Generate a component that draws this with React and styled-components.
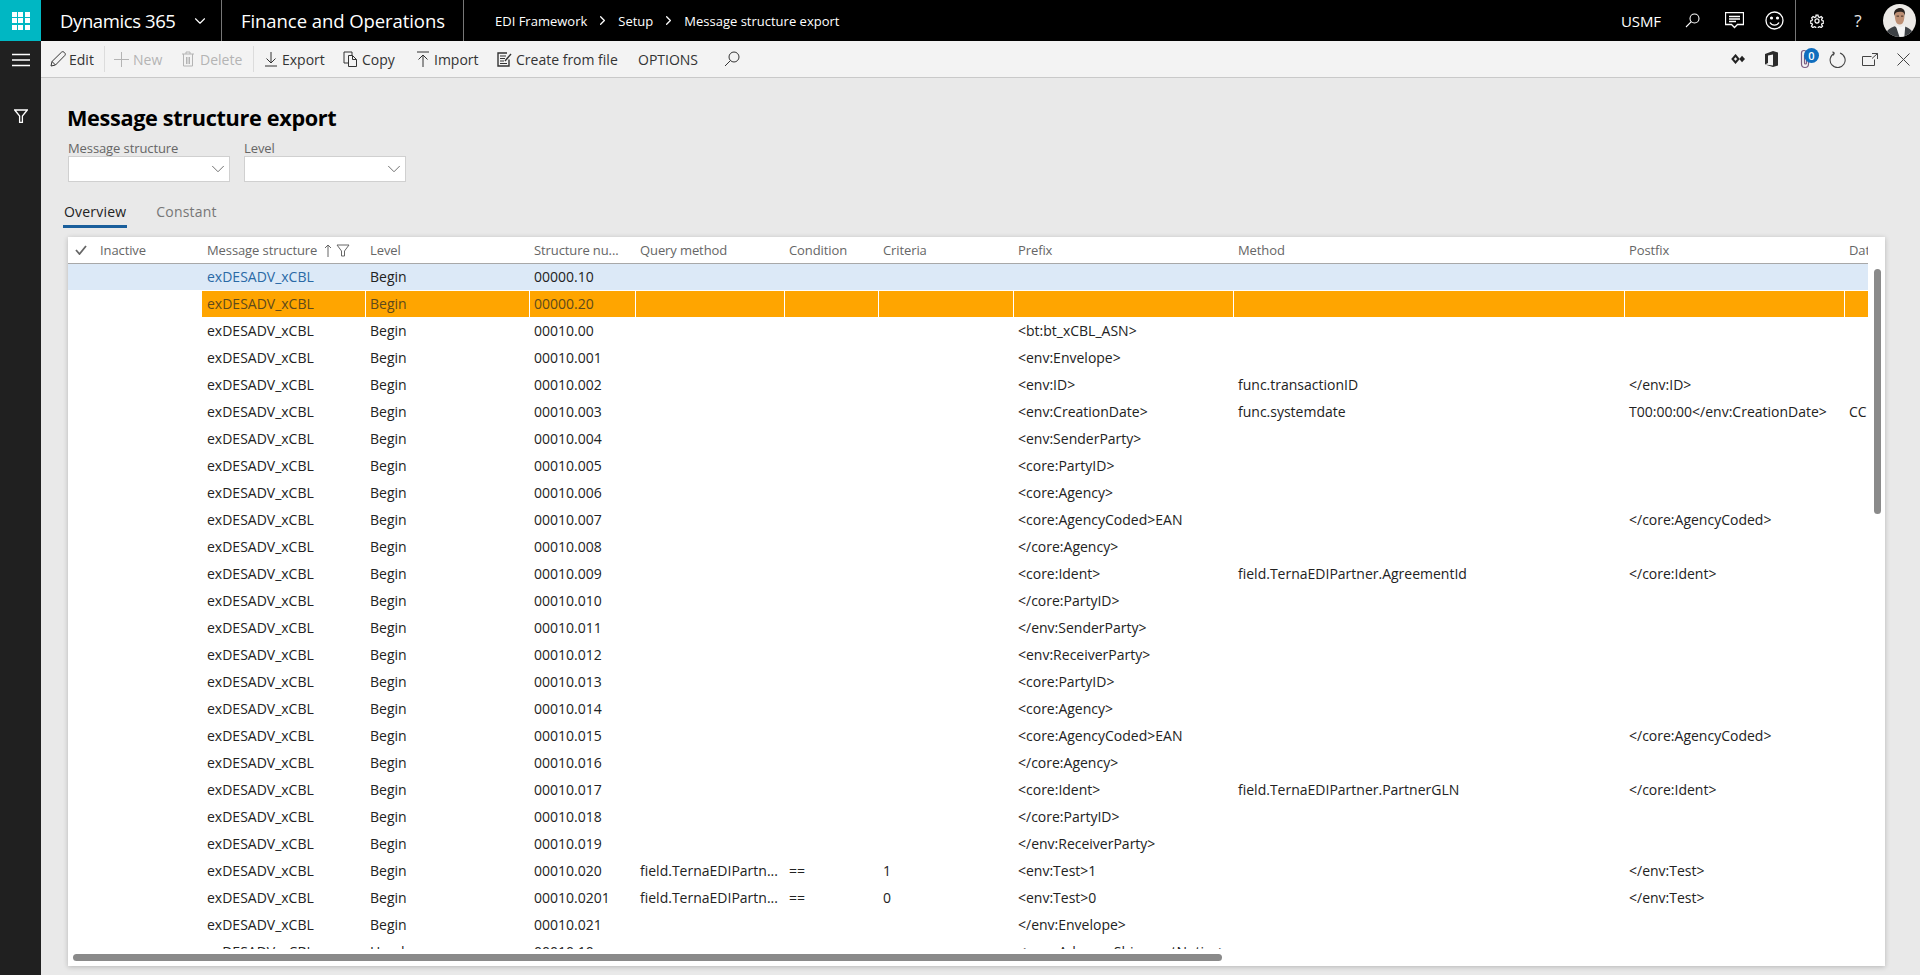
import React from 'react';
import styled, { createGlobalStyle } from 'styled-components';
import { ChevronDown, ChevronRight } from 'lucide-react';

const FONT = '"Open Sans", "Noto Sans", sans-serif';

const Global = createGlobalStyle`
  html, body { margin: 0; padding: 0; height: 100%; overflow: hidden; }
  body { font-family: ${FONT}; font-size: 13px; color: #222; background: #e9e9e9; }
  * { box-sizing: border-box; }
`;

const Page = styled.div`
  display: flex;
  flex-direction: column;
  width: 1920px;
  height: 975px;
  overflow: hidden;
`;

/* top black nav */
const TopBar = styled.header`
  display: flex;
  align-items: center;
  height: 41px;
  flex: none;
  background: #000;
  color: #fff;
`;
const Waffle = styled.div`
  display: grid;
  grid-template-columns: repeat(3, 5px);
  grid-auto-rows: 5px;
  gap: 1.5px;
  place-content: center;
  width: 41px;
  height: 41px;
  background: #00b7c3;
  i { background: #fff; }
`;
const Product = styled.div`
  display: flex;
  align-items: center;
  gap: 15px;
  width: 181px;
  height: 41px;
  padding-left: 19px;
  font-size: 18.5px;
  letter-spacing: -0.4px;
  border-right: 1px solid #777;
`;
const Module = styled.div`
  display: flex;
  align-items: center;
  width: 242px;
  height: 41px;
  padding-left: 19px;
  font-size: 18.5px;
  letter-spacing: -0.07px;
  white-space: nowrap;
  border-right: 1px solid #777;
`;
const Crumbs = styled.nav`
  display: flex;
  align-items: center;
  padding-left: 31px;
  font-size: 13px;
  span { white-space: nowrap; }
  svg { margin: 0 8px; }
`;
const TopRight = styled.div`
  display: flex;
  align-items: center;
  margin-left: auto;
  height: 41px;
`;
const Company = styled.span`
  font-size: 15px;
  letter-spacing: -0.1px;
  margin-right: 24px;
`;
const TopIcon = styled.span`
  display: flex;
  justify-content: center;
  align-items: center;
  width: ${(p) => p.$w}px;
  height: 41px;
  margin-left: ${(p) => p.$ml || 0}px;
`;
const Help = styled(TopIcon)`
  font-size: 17px;
  color: #e8e8e8;
`;
const TopSep = styled.div`
  width: 1px;
  height: 41px;
  background: #777;
`;

const Body = styled.div`
  display: flex;
  flex: 1;
  min-height: 0;
`;

/* left rail */
const Rail = styled.aside`
  display: flex;
  flex-direction: column;
  align-items: center;
  flex: none;
  width: 41px;
  background: #202020;
  color: #fff;
`;
const RailBtn = styled.div`
  display: flex;
  align-items: center;
  justify-content: center;
  width: 41px;
  height: ${(p) => p.$h}px;
  margin-top: ${(p) => p.$mt || 0}px;
`;

const Main = styled.main`
  display: flex;
  flex-direction: column;
  flex: 1;
  min-width: 0;
`;

/* action pane */
const Toolbar = styled.div`
  display: flex;
  align-items: center;
  flex: none;
  height: 37px;
  padding-left: 9px;
  background: #f3f3f3;
  border-bottom: 1px solid #c9c9c9;
`;
const TBtn = styled.div`
  display: flex;
  align-items: center;
  gap: ${(p) => p.$gap ?? 4}px;
  flex: none;
  width: ${(p) => p.$w}px;
  margin-left: ${(p) => p.$ml || 0}px;
  font-size: 14px;
  color: ${(p) => (p.$off ? '#b4b4b4' : '#333')};
  white-space: nowrap;
`;
const TSep = styled.div`
  flex: none;
  width: 1px;
  height: 26px;
  background: #dcdcdc;
`;
const TRight = styled.div`
  display: flex;
  align-items: center;
  margin-left: auto;
  height: 36px;
`;
const TIcon = styled.span`
  position: relative;
  display: flex;
  align-items: center;
  justify-content: center;
  width: ${(p) => p.$w}px;
  height: 36px;
`;
const Badge = styled.span`
  position: absolute;
  top: 7px;
  left: 16px;
  width: 15px;
  height: 15px;
  border-radius: 50%;
  background: #106ebe;
  color: #fff;
  font-size: 11px;
  font-weight: 600;
  line-height: 15px;
  text-align: center;
`;

/* form header */
const Content = styled.div`
  display: flex;
  flex-direction: column;
  flex: 1;
  min-height: 0;
  padding: 25px 35px 0 26px;
`;
const Title = styled.h1`
  margin: 0;
  font-size: 21.7px;
  line-height: 30px;
  font-weight: 700;
  letter-spacing: -0.35px;
  color: #000;
`;
const Filters = styled.div`
  display: flex;
  gap: 14px;
  margin: 8px 0 0 1px;
`;
const Field = styled.label`
  display: flex;
  flex-direction: column;
  width: 162px;
  font-size: 13px;
  letter-spacing: -0.1px;
  line-height: 14px;
  color: #666;
`;
const Select = styled.div`
  display: flex;
  align-items: center;
  justify-content: flex-end;
  height: 26px;
  margin-top: 1px;
  background: #fff;
  border: 1px solid #d0d0d0;
  color: #666;
`;
const Tabs = styled.div`
  display: flex;
  gap: 28px;
  margin: 20px 0 0 -4px;
`;
const Tab = styled.div`
  height: 26px;
  padding: 0 1px;
  font-size: 14px;
  letter-spacing: 0.2px;
  line-height: 20px;
  color: ${(p) => (p.$on ? '#222' : '#777')};
  border-bottom: 3px solid ${(p) => (p.$on ? '#1a5f9c' : 'transparent')};
`;

/* grid */
const COLS = '134px 163px 164px 106px 149px 94px 135px 220px 391px 220px 24px';

const Card = styled.section`
  position: relative;
  flex: none;
  width: 1817px;
  height: 729px;
  margin: 9px 0 0 1px;
  background: #fff;
  box-shadow: 0 1px 5px rgba(0, 0, 0, 0.22);
`;
const HeadRow = styled.div`
  display: grid;
  grid-template-columns: ${COLS};
  height: 27px;
  width: 1800px;
  border-bottom: 1px solid #a8a8a8;
  color: #666;
  font-size: 13px;
  letter-spacing: -0.1px;
  line-height: 26px;
`;
const HeadCell = styled.div`
  display: flex;
  align-items: center;
  padding-left: 5px;
  overflow: hidden;
  white-space: nowrap;
`;
const Inactive = styled(HeadCell)`
  gap: 13px;
  padding-left: 7px;
`;
const SortIcon = styled.svg`
  flex: none;
  margin: 0 4px 0 7px;
`;
const FilterIcon = styled.svg`
  flex: none;
`;
const Rows = styled.div`
  width: 1800px;
  height: 685px;
  overflow: hidden;
`;
const Row = styled.div`
  display: grid;
  grid-template-columns: ${COLS};
  height: 27px;
  border-bottom: 1px solid #fff;
  background: ${(p) => (p.$current ? '#dce9f7' : '#fff')};
`;
const Cell = styled.div`
  padding-left: 4px;
  font-size: 14px;
  line-height: 26px;
  white-space: nowrap;
  overflow: hidden;
  color: ${(p) => (p.$link ? '#2a6aa6' : p.$marked ? '#5e4a1c' : '#222')};
  background: ${(p) => (p.$marked ? '#ffa500' : 'transparent')};
  border-left: 1px solid ${(p) => (p.$marked && !p.$first ? '#fff' : 'transparent')};
`;
const VThumb = styled.div`
  position: absolute;
  top: 32px;
  left: 1806px;
  width: 7px;
  height: 245px;
  border-radius: 4px;
  background: #8a8a8a;
`;
const HThumb = styled.div`
  position: absolute;
  left: 5px;
  top: 717px;
  width: 1149px;
  height: 7px;
  border-radius: 4px;
  background: #8a8a8a;
`;

const Svg = ({ w, h = w, vb, children, ...rest }) => (
  <svg width={w} height={h} viewBox={vb || `0 0 ${w} ${h}`} fill="none" stroke="currentColor" strokeWidth="1" {...rest}>
    {children}
  </svg>
);

const Avatar = () => (
  <svg width="33" height="33" viewBox="0 0 34 34">
    <defs>
      <clipPath id="av"><circle cx="17" cy="17" r="17" /></clipPath>
    </defs>
    <g clipPath="url(#av)">
      <rect width="34" height="34" fill="#ece9e6" />
      <path d="M2 34c1-7 5-9 10-11l5 3 5-3c5 2 9 4 10 11z" fill="#3d4145" />
      <path d="M13 22l4 12h5l1-12-5 2z" fill="#f4f4f4" />
      <path d="M12 9c0-4 9-5 10 0 .4 4-.2 9-2 11-1.400 1.600-4 1.600-5.600 0C12.600 18 12 13 12 9z" fill="#bd8f74" />
      <path d="M11.500 12c-1-6 3-8 6-8s6 2 5 8c-.5-3-1.500-4-5-4s-5 1-6 4z" fill="#2a2320" />
      <path d="M14 12.500h2.500M18.500 12.500H21" stroke="#3a2a20" strokeWidth="1" />
    </g>
  </svg>
);

const PREFIX_ROWS = [
  ['00000.10'],
  ['00000.20'],
  ['00010.00', '<bt:bt_xCBL_ASN>'],
  ['00010.001', '<env:Envelope>'],
  ['00010.002', '<env:ID>', 'func.transactionID', '</env:ID>'],
  ['00010.003', '<env:CreationDate>', 'func.systemdate', 'T00:00:00</env:CreationDate>', 'CC'],
  ['00010.004', '<env:SenderParty>'],
  ['00010.005', '<core:PartyID>'],
  ['00010.006', '<core:Agency>'],
  ['00010.007', '<core:AgencyCoded>EAN', '', '</core:AgencyCoded>'],
  ['00010.008', '</core:Agency>'],
  ['00010.009', '<core:Ident>', 'field.TernaEDIPartner.AgreementId', '</core:Ident>'],
  ['00010.010', '</core:PartyID>'],
  ['00010.011', '</env:SenderParty>'],
  ['00010.012', '<env:ReceiverParty>'],
  ['00010.013', '<core:PartyID>'],
  ['00010.014', '<core:Agency>'],
  ['00010.015', '<core:AgencyCoded>EAN', '', '</core:AgencyCoded>'],
  ['00010.016', '</core:Agency>'],
  ['00010.017', '<core:Ident>', 'field.TernaEDIPartner.PartnerGLN', '</core:Ident>'],
  ['00010.018', '</core:PartyID>'],
  ['00010.019', '</env:ReceiverParty>'],
  ['00010.020', '<env:Test>1', '', '</env:Test>', '', 'field.TernaEDIPartn...', '==', '1'],
  ['00010.0201', '<env:Test>0', '', '</env:Test>', '', 'field.TernaEDIPartn...', '==', '0'],
  ['00010.021', '</env:Envelope>'],
  ['00010.10', '<core:AdvanceShipmentNotice>'],
];

function GridRow({ data, index }) {
  const [num, prefix = '', method = '', postfix = '', dat = '', query = '', cond = '', crit = ''] = data;
  const marked = index === 1;
  const level = index === 25 ? 'Header' : 'Begin';
  const values = [level, num, query, cond, crit, prefix, method, postfix, dat];
  return (
    <Row $current={index === 0}>
      <Cell />
      <Cell $first $marked={marked} $link={index === 0}>exDESADV_xCBL</Cell>
      {values.map((v, i) => (
        <Cell key={i} $marked={marked}>{v}</Cell>
      ))}
    </Row>
  );
}

export default function App() {
  return (
    <Page>
      <Global />
      <TopBar>
        <Waffle>{Array.from({ length: 9 }, (_, i) => <i key={i} />)}</Waffle>
        <Product>Dynamics 365 <ChevronDown size={18} strokeWidth={1.5} /></Product>
        <Module>Finance and Operations</Module>
        <Crumbs>
          <span>EDI Framework</span>
          <ChevronRight size={15} strokeWidth={2} />
          <span>Setup</span>
          <ChevronRight size={15} strokeWidth={2} />
          <span>Message structure export</span>
        </Crumbs>
        <TopRight>
          <Company>USMF</Company>
          <TopIcon $w={15}>
            <Svg w={15} strokeWidth="1.100"><circle cx="9.500" cy="5.500" r="4.500" /><path d="M6.300 8.700 1 14" /></Svg>
          </TopIcon>
          <TopIcon $w={40} $ml={14}>
            <Svg w={19} h={17}>
              <path d="M.5.500h18v12h-6l-3 3-3-3h-6z" strokeWidth="1.300" />
              <path d="M4 4.500h11M4 7h11M4 9.500h7" strokeWidth="1.300" />
            </Svg>
          </TopIcon>
          <TopIcon $w={41}>
            <Svg w={19} strokeWidth="1.300">
              <circle cx="9.500" cy="9.500" r="8.500" />
              <circle cx="6.500" cy="7" r=".9" fill="currentColor" />
              <circle cx="12.500" cy="7" r=".9" fill="currentColor" />
              <path d="M5 11.500c2 3.500 7 3.500 9 0" />
            </Svg>
          </TopIcon>
          <TopSep />
          <TopIcon $w={42}>
            <Svg w={14} vb="0 0 24 24" strokeWidth="2.100">
              <circle cx="12" cy="12" r="3.500" />
              <path d="M10.300 2h3.400l.6 3 2.200 1 2.600-1.700 2.400 2.400-1.700 2.600 1 2.200 3 .6v3.400l-3 .6-1 2.200 1.700 2.600-2.400 2.400-2.600-1.700-2.200 1-.6 3h-3.400l-.6-3-2.200-1-2.600 1.700-2.400-2.400 1.700-2.600-1-2.200-3-.6v-3.400l3-.6 1-2.200L2.900 6.700l2.400-2.400 2.600 1.700 2.200-1z" />
            </Svg>
          </TopIcon>
          <Help $w={40}>?</Help>
          <TopIcon $w={42}><Avatar /></TopIcon>
        </TopRight>
      </TopBar>
      <Body>
        <Rail>
          <RailBtn $h={37}>
            <Svg w={18} h={14}><path d="M0 1.500h18M0 7h18M0 12.500h18" strokeWidth="1.300" /></Svg>
          </RailBtn>
          <RailBtn $h={20} $mt={28}>
            <Svg w={14} strokeWidth="1.300"><path d="M.7 1h12.600L8.400 7v6.500H5.600V7z" /></Svg>
          </RailBtn>
        </Rail>
        <Main>
          <Toolbar>
            <TBtn $w={54} $gap={3}>
              <Svg w={16}><path d="M1 15l1-4.500L11.500 1.200c.8-.7 1.800-.7 2.500 0l.8.800c.7.700.7 1.700 0 2.500L5.500 14z" /><path d="M2 10.500 5.500 14" /></Svg>
              Edit
            </TBtn>
            <TSep />
            <TBtn $w={68} $ml={8} $off $gap={3}>
              <Svg w={17}><path d="M8.500 1v15M1 8.500h15" /></Svg>
              New
            </TBtn>
            <TBtn $w={72} $off $gap={5}>
              <Svg w={14} h={16}><path d="M1 3h12M5 3V1h4v2M2.500 3v12h9V3M5.500 6v7M7 6v7M8.500 6v7" /></Svg>
              Delete
            </TBtn>
            <TSep />
            <TBtn $w={78} $ml={11} $gap={5}>
              <Svg w={12} h={16}><path d="M6 1v11M1.500 7.500 6 12l4.500-4.500M0 15h12" /></Svg>
              Export
            </TBtn>
            <TBtn $w={73} $gap={5}>
              <Svg w={14} h={16}><path d="M9 4.500V1H1v11h4M5.500 4.500h4l4 4v7h-8zM9.500 4.500v4h4" /></Svg>
              Copy
            </TBtn>
            <TBtn $w={81}>
              <Svg w={14} h={16}><path d="M1 1h12M7 4v12M2.500 8.500 7 4l4.500 4.500" /></Svg>
              Import
            </TBtn>
            <TBtn $w={141}>
              <Svg w={15} h={16}><path d="M12 8.500V15H1V2h9" strokeWidth="1.400" /><path d="M3 5h6M3 7.500h5M3 10h4M3 12.500h7" strokeWidth="1.200" /><path d="M8 10l6-7" strokeWidth="1.400" /></Svg>
              Create from file
            </TBtn>
            <TBtn $w={86}>OPTIONS</TBtn>
            <TBtn $w={17}>
              <Svg w={16}><circle cx="10" cy="6" r="5" /><path d="M6.500 9.500 1 15" /></Svg>
            </TBtn>
            <TRight>
              <TIcon $w={34}>
                <Svg w={14} h={10} stroke="#222">
                  <path d="M4.500 1.500 7.500 5 4.500 8.500 1.500 5z" strokeWidth="2" />
                  <path d="M11 1.800 14 5 11 8.200 8.300 5z" fill="#222" stroke="none" />
                </Svg>
              </TIcon>
              <TIcon $w={33}>
                <Svg w={13} h={16} stroke="none">
                  <path d="M0 3 8 0l5 1.500v13L8 16l-8-2.500 8 .9V3.500L3 4.500v7.500L0 13.500z" fill="#2b2b2b" />
                </Svg>
              </TIcon>
              <TIcon $w={33}>
                <Svg w={10} h={20} stroke="#7a5d82" strokeWidth="1.200">
                  <path d="M8.500 6v9a3.500 3.500 0 0 1-7 0V4a2.500 2.500 0 0 1 5 0v10a1 1 0 0 1-2 0V6" />
                </Svg>
                <Badge>0</Badge>
              </TIcon>
              <TIcon $w={32}>
                <Svg w={17} stroke="#444"><path d="M5.500 2.300A7.500 7.500 0 1 0 11 2M5.500 2.300 3.500.800M5.500 2.300 4 4.500" strokeWidth="1.100" /></Svg>
              </TIcon>
              <TIcon $w={34}>
                <Svg w={16} h={13} stroke="#444"><path d="M12.500 6.500v6H.5v-9h9M10 .5h5.500V6M15.500.5l-5.500 5" /></Svg>
              </TIcon>
              <TIcon $w={33}>
                <Svg w={13} stroke="#444"><path d="M.5.500l12 12M12.500.500l-12 12" /></Svg>
              </TIcon>
            </TRight>
          </Toolbar>
          <Content>
            <Title>Message structure export</Title>
            <Filters>
              <Field>
                Message structure
                <Select><ChevronDown size={22} strokeWidth={1} /></Select>
              </Field>
              <Field>
                Level
                <Select><ChevronDown size={22} strokeWidth={1} /></Select>
              </Field>
            </Filters>
            <Tabs>
              <Tab $on>Overview</Tab>
              <Tab>Constant</Tab>
            </Tabs>
            <Card>
              <HeadRow>
                <Inactive>
                  <Svg w={12} h={10} strokeWidth="1.800"><path d="M1 5l3.500 4L11 1" /></Svg>
                  <span>Inactive</span>
                </Inactive>
                <HeadCell>
                  <span>Message structure</span>
                  <SortIcon width="8" height="13" viewBox="0 0 8 13" fill="none" stroke="currentColor"><path d="M4 13V1M1 4l3-3 3 3" /></SortIcon>
                  <FilterIcon width="14" height="13" viewBox="0 0 14 13" fill="none" stroke="currentColor"><path d="M1 1h12L8.500 7v5h-3V7z" /></FilterIcon>
                </HeadCell>
                <HeadCell>Level</HeadCell>
                <HeadCell>Structure nu...</HeadCell>
                <HeadCell>Query method</HeadCell>
                <HeadCell>Condition</HeadCell>
                <HeadCell>Criteria</HeadCell>
                <HeadCell>Prefix</HeadCell>
                <HeadCell>Method</HeadCell>
                <HeadCell>Postfix</HeadCell>
                <HeadCell>Dat</HeadCell>
              </HeadRow>
              <Rows>
                {PREFIX_ROWS.map((r, i) => (
                  <GridRow key={r[0]} data={r} index={i} />
                ))}
              </Rows>
              <VThumb />
              <HThumb />
            </Card>
          </Content>
        </Main>
      </Body>
    </Page>
  );
}
